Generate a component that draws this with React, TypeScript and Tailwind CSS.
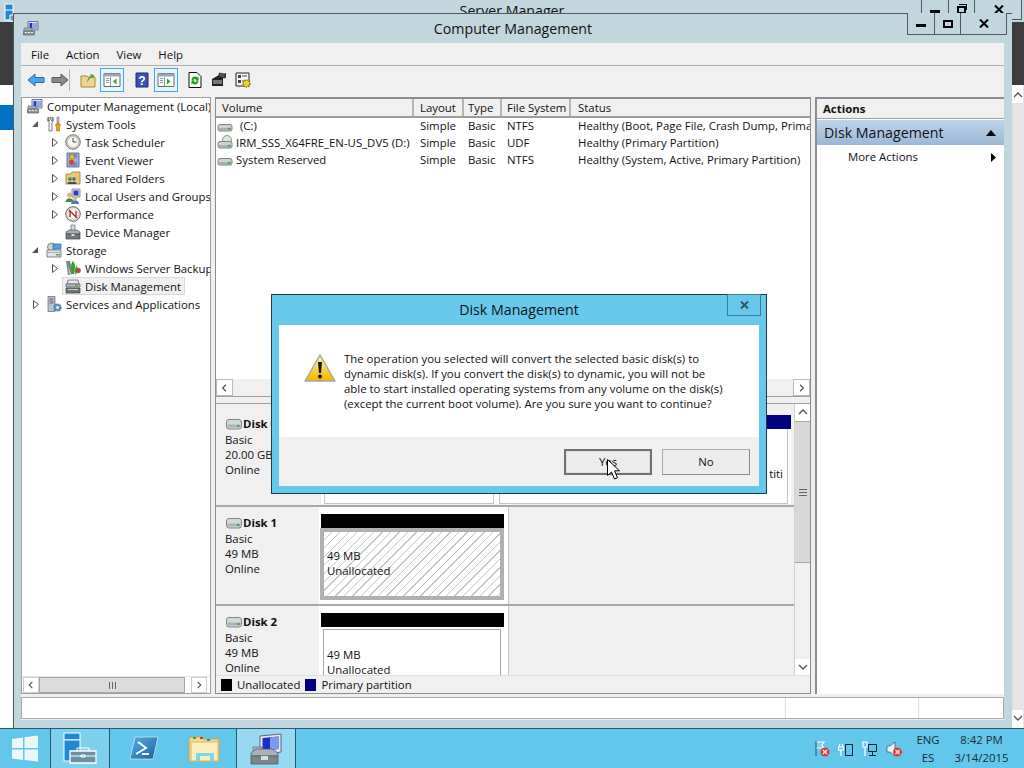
import React from "react";

const F = "font-['Open_Sans','Noto_Sans',sans-serif]";

const Computer = ({ s = 16 }: { s?: number }) => (
  <svg width={s} height={s} viewBox="0 0 16 16" className="shrink-0">
    <path d="M5 1.500h10v8.500H5z" fill="#dfe6ee" stroke="#6b7480" />
    <path d="M6.500 3h7v5.500h-7z" fill="#2233cc" />
    <path d="M9 3h4.500v5.500H9z" fill="#8fa8ee" />
    <path d="M1 8h8v3H1z" fill="#a9b2b4" stroke="#667" strokeWidth=".6" />
    <path d="M0.500 11h11v4h-11z" fill="#8b9698" stroke="#5c6668" strokeWidth=".7" />
    <path d="M2 12.500h2M5 12.500h2M8 12.500h2" stroke="#e8ecec" />
  </svg>
);
const Tools = () => (
  <svg width="16" height="16" viewBox="0 0 16 16" className="shrink-0">
    <path d="M4 1v3l-1.500 1.500V1C1 2 1 5 3 6.500V15h3V6.500C8 5 8 2 6.500 1v4.500L5 4V1z" fill="#f2f2f2" stroke="#666" strokeWidth=".8" />
    <path d="M11 1h2v7h-2z" fill="#bbb" stroke="#777" strokeWidth=".6" />
    <path d="M10 8h4l.5 1-1 2v4h-3v-4l-1-2z" fill="#e8a810" stroke="#a87008" strokeWidth=".6" />
  </svg>
);
const Clock = () => (
  <svg width="16" height="16" viewBox="0 0 16 16" className="shrink-0">
    <circle cx="8" cy="8" r="7.300" fill="#d8d2b8" stroke="#777" />
    <circle cx="8" cy="8" r="5.500" fill="#f8f8f4" stroke="#aaa" strokeWidth=".6" />
    <path d="M8 4v4h3.500" stroke="#444" fill="none" />
  </svg>
);
const EventV = () => (
  <svg width="16" height="16" viewBox="0 0 16 16" className="shrink-0">
    <path d="M2 1h12v14H2z" fill="#9fb2d8" stroke="#44598f" strokeWidth=".8" />
    <path d="M4 3h8M4 5h8M4 11h8M4 13h8" stroke="#44598f" strokeWidth=".8" />
    <path d="M7 1.500l3 5H4z" fill="#f4c820" stroke="#a88410" strokeWidth=".5" />
    <circle cx="6.500" cy="10" r="2.500" fill="#d84040" />
  </svg>
);
const FolderS = () => (
  <svg width="16" height="16" viewBox="0 0 16 16" className="shrink-0">
    <path d="M1 4h5l1-2h8v12H1z" fill="#e8c878" stroke="#a08030" strokeWidth=".8" />
    <circle cx="5" cy="9" r="1.800" fill="#3a8a3a" />
    <circle cx="9" cy="9" r="1.800" fill="#3a6aaa" />
    <path d="M2.500 14c0-3 5-3 5 0zM6.500 14c0-3 5-3 5 0z" fill="#446" />
  </svg>
);
const Users = () => (
  <svg width="16" height="16" viewBox="0 0 16 16" className="shrink-0">
    <path d="M7 1h8v8H7z" fill="#dfe6ee" stroke="#667" strokeWidth=".7" />
    <path d="M8.500 2.500h5v5h-5z" fill="#2a3ccc" />
    <circle cx="4.500" cy="7" r="2.500" fill="#d9b48c" />
    <path d="M0.500 14c0-5 8-5 8 0z" fill="#4a8a4a" />
    <circle cx="10" cy="10" r="2.300" fill="#e0b890" />
    <path d="M6 16c0-5 8-5 8 0z" fill="#4a78b8" />
  </svg>
);
const Perf = () => (
  <svg width="16" height="16" viewBox="0 0 16 16" className="shrink-0">
    <circle cx="8" cy="8" r="7.300" fill="#e8e4d8" stroke="#666" />
    <circle cx="8" cy="8" r="5" fill="#fff" stroke="#bbb" strokeWidth=".5" />
    <path d="M4 4l8 8M5 11V5l6 6V5" stroke="#b02020" strokeWidth="1.300" fill="none" />
  </svg>
);
const Device = () => (
  <svg width="16" height="16" viewBox="0 0 16 16" className="shrink-0">
    <path d="M6 1h4v6H6z" fill="#cfe0cf" stroke="#667" strokeWidth=".7" />
    <path d="M1 8l3-2h8l3 2v2H1z" fill="#a8b0b2" stroke="#556" strokeWidth=".7" />
    <path d="M1 10h14v5H1z" fill="#6f7a7e" stroke="#444" strokeWidth=".7" />
    <path d="M6.500 10h3v2h-3z" fill="#ddd" />
  </svg>
);
const Storage = () => (
  <svg width="16" height="16" viewBox="0 0 16 16" className="shrink-0">
    <circle cx="5.500" cy="5" r="4" fill="#ccd4cc" stroke="#667" strokeWidth=".7" />
    <path d="M7 2h8v5H7z" fill="#4ca4d8" stroke="#2a6a98" strokeWidth=".7" />
    <path d="M1 8h14v7H1z" fill="#e0e4e4" stroke="#667" strokeWidth=".8" />
    <path d="M10 12h4v1.500h-4z" fill="#58b048" />
    <path d="M2 10.500h12" stroke="#aab" />
  </svg>
);
const Backup = () => (
  <svg width="16" height="16" viewBox="0 0 16 16" className="shrink-0">
    <path d="M1 1l2 14h2L3 6l3 9 2-3-3-11z" fill="#7a8a8a" />
    <path d="M6 8c0-4 1-6 2-7 1 1 2 3 2 7l-1 6H7z" fill="#30a030" />
    <path d="M12 5l-3 4 1 6 3-3z" fill="#58c040" />
    <circle cx="13" cy="10.500" r="2.500" fill="#b05040" stroke="#555" strokeWidth=".5" />
  </svg>
);
const DiskM = () => (
  <svg width="16" height="16" viewBox="0 0 16 16" className="shrink-0">
    <path d="M3 2h10l1 4H2z" fill="#e4e8e8" stroke="#556" strokeWidth=".7" />
    <path d="M1 6h14v3H1z" fill="#b4bcbc" stroke="#556" strokeWidth=".7" />
    <path d="M10 7h3v1h-3z" fill="#40a040" />
    <path d="M1 10h14v5H1z" fill="#6c7678" stroke="#444" strokeWidth=".7" />
    <path d="M3 11.500h10" stroke="#ccc" />
  </svg>
);
const Services = () => (
  <svg width="16" height="16" viewBox="0 0 16 16" className="shrink-0">
    <path d="M2 0.500h7v15H2z" fill="#b8c2c8" stroke="#667" strokeWidth=".7" />
    <path d="M3.500 3h4M3.500 5h4M3.500 7h4" stroke="#667" />
    <circle cx="11.500" cy="11.500" r="3.500" fill="#6a9ac8" stroke="#3c6c98" strokeWidth="1.200" strokeDasharray="1.500 .8" />
    <circle cx="11.500" cy="11.500" r="1.200" fill="#fff" />
  </svg>
);
const DriveI = ({ cd }: { cd?: boolean }) => (
  <svg width="16" height="16" viewBox="0 0 16 16" className="shrink-0">
    {cd && <circle cx="10" cy="5" r="4.500" fill="#d8ead8" stroke="#667" strokeWidth=".7" />}
    <path d="M1 8.500q0-2 2-2h10q2 0 2 2v3q0 1.500-2 1.500H3q-2 0-2-1.500z" fill="#cdd2d2" stroke="#7a8282" />
    <path d="M2 10h12v2H2z" fill="#a9afaf" />
    <path d="M11 9.800h2.500v2H11z" fill="#48a848" />
  </svg>
);
const DiskSmall = () => (
  <svg width="16" height="11" viewBox="0 0 16 11" className="shrink-0">
    <path d="M.500 3q0-2.500 2.500-2.500h10q2.500 0 2.500 2.500v4.500q0 2.500-2.500 2.500H3q-2.500 0-2.500-2.500z" fill="#d4d8d8" stroke="#808686" />
    <path d="M1.500 5.500h13v3h-13z" fill="#aeb4b4" />
    <path d="M11 6h2.500v2H11z" fill="#48a848" />
  </svg>
);

const Arrow = ({ open }: { open?: boolean }) =>
  open ? (
    <svg width="16" height="18" viewBox="0 0 16 18" className="shrink-0">
      <path d="M11 6v6H5z" fill="#595959" />
    </svg>
  ) : (
    <svg width="16" height="18" viewBox="0 0 16 18" className="shrink-0">
      <path d="M6.500 5.500l5 4-5 4z" fill="#fff" stroke="#555" />
    </svg>
  );

const TreeRow = ({
  pad,
  arrow,
  icon,
  label,
  selected,
}: {
  pad: string;
  arrow?: "open" | "closed" | "none";
  icon: React.ReactNode;
  label: string;
  selected?: boolean;
}) => (
  <div className={`flex h-[18px] items-center ${pad}`}>
    {arrow === "open" && <div className="mr-[3px]"><Arrow open /></div>}
    {arrow === "closed" && <div className="mr-[3px]"><Arrow /></div>}
    {arrow === "none" && <div className="mr-[3px] w-[16px]" />}
    <div className={`flex h-[18px] items-center ${selected ? "-ml-[3px] border border-[#d9d9d9] bg-[#f0f0f0] pl-[2px]" : ""}`}>
      {icon}
      <span className={`whitespace-nowrap pl-[4px] leading-[17px] ${selected ? "pr-[3px]" : ""}`}>{label}</span>
    </div>
  </div>
);

const Th = ({ w, pl, children }: { w: string; pl: string; children: React.ReactNode }) => (
  <div className={`flex h-full shrink-0 items-center border-r-2 border-[#b4b4b4] ${pl} ${w}`}>{children}</div>
);

const VolRow = ({ icon, name, pl, layout, type, fs, status }: any) => (
  <div className="flex h-[17px] items-center whitespace-nowrap">
    <div className="flex w-[199px] shrink-0 items-center pl-[1px]">
      {icon}
      <span className={pl}>{name}</span>
    </div>
    <div className="w-[50px] shrink-0 pl-[5px]">{layout}</div>
    <div className="w-[38px] shrink-0 pl-[3px]">{type}</div>
    <div className="w-[71px] shrink-0 pl-[4px]">{fs}</div>
    <div className="shrink-0 pl-[4px]">{status}</div>
  </div>
);

const Chevron = ({ d }: { d: "l" | "r" | "u" | "d" }) => {
  const p = { l: "M9.500 4.500L6 8l3.500 3.500", r: "M6.500 4.500L10 8l-3.500 3.500", u: "M4 10l4-4 4 4", d: "M4 6l4 4 4-4" }[d];
  return (
    <svg width="16" height="16" viewBox="0 0 16 16">
      <path d={p} fill="none" stroke="#555" strokeWidth="1.300" />
    </svg>
  );
};

const ToolBtn = ({ active, children, mr }: { active?: boolean; children: React.ReactNode; mr?: string }) => (
  <div className={`flex h-[24px] w-[24px] shrink-0 items-center justify-center ${active ? "border border-[#45a6e0] bg-[#e8f3fa]" : ""} ${mr ?? ""}`}>{children}</div>
);

const PaneIcon = ({ right }: { right?: boolean }) => (
  <svg width="18" height="16" viewBox="0 0 18 16">
    <path d="M1 1.500h16v13H1z" fill="#fff" stroke="#5d6b7a" />
    <path d="M1 1.500h16v3H1z" fill="#9aa8b6" />
    <path d="M3 6.500h3M3 8.500h3M3 10.500h3" stroke="#8a97a4" />
    <path d="M7.500 5v9" stroke="#8a97a4" />
    <path d={right ? "M10 6.500l3.500 3-3.500 3z" : "M13.500 6.500l-3.500 3 3.500 3z"} fill="#30a030" />
  </svg>
);

const RedX = ({ x, y }: { x: number; y: number }) => (
  <g>
    <circle cx={x} cy={y} r="4.500" fill="#e03a3a" />
    <path d={`M${x - 2} ${y - 2}l4 4m0-4l-4 4`} stroke="#fff" strokeWidth="1.200" />
  </g>
);

const Legend = ({ c, t }: { c: string; t: string }) => (
  <div className="flex items-center gap-[5px]">
    <div className={`h-[12px] w-[11px] ${c}`} />
    <span>{t}</span>
  </div>
);

const DiskLabel = ({ name, size, pt }: { name: string; size: string; pt: string }) => (
  <div className={`w-[103px] shrink-0 pl-[9px] leading-[15px] ${pt}`}>
    <div className="flex h-[16px] items-center gap-[1px] pl-[1px] font-bold">
      <DiskSmall />
      <span className="leading-[16px]">{name}</span>
    </div>
    <div>Basic</div>
    <div>{size}</div>
    <div>Online</div>
  </div>
);

export default function App() {
  return (
    <div className={`relative h-[768px] w-[1024px] overflow-hidden bg-white text-[11.4px] text-[#111] ${F}`}>
      {/* back window: Server Manager */}
      <div className="absolute inset-x-0 top-0 h-[728px] bg-white">
        <div className="relative h-[22px] bg-[#c2d6dd] text-center text-[14.2px] leading-[22px]">
          Server Manager
          <svg width="18" height="20" viewBox="0 0 18 20" className="absolute left-[2px] top-[3px]">
            <path d="M3 1h8v16H3z" fill="#1e8ad6" stroke="#fff" />
            <path d="M3 7h8" stroke="#fff" />
            <path d="M8 12h9v6H8z" fill="#7a93a5" stroke="#fff" />
          </svg>
          <div className="absolute right-[2px] top-0 flex h-[20px] w-[101px] border-x border-b border-[#4a5a62]">
            <div className="flex w-[27px] justify-center border-r border-[#4a5a62]">
              <div className="mt-[10px] h-[3px] w-[10px] bg-black" />
            </div>
            <div className="flex w-[26px] justify-center border-r border-[#4a5a62]">
              <div className="relative mt-[6px] h-[8px] w-[9px] border-2 border-black">
                <div className="absolute -right-[3px] -top-[4px] h-[6px] w-[8px] border-r border-t border-black" />
              </div>
            </div>
            <div className="flex flex-1 justify-center pl-[2px] pt-[5px]">
              <svg width="10" height="9" viewBox="0 0 10 9"><path d="M1 .5l8 8m0-8l-8 8" stroke="#000" strokeWidth="2" /></svg>
            </div>
          </div>
        </div>
        <div className="h-[63px] bg-[#3c3c3c]" />
        <div className="h-[20px] bg-white" />
        <div className="h-[25px] w-[13px] bg-[#0072c6]" />
        <div className="absolute right-0 top-[85px] h-[643px] w-[12px] border-l border-[#ddd] bg-[#e6e6e6]">
          <div className="-ml-[3px] h-[18px] w-[13px] overflow-hidden bg-white pt-[2px]"><Chevron d="u" /></div>
          <div className="absolute bottom-0 -ml-[3px] h-[18px] w-[13px] overflow-hidden bg-white"><Chevron d="d" /></div>
        </div>
      </div>

      {/* front window */}
      <div className="absolute left-[13px] top-[13px] flex h-[715px] w-[999px] flex-col border-l border-t border-[#4b5a62] bg-[#c2d6dd] pb-[8px]">
        <div className="relative h-[29px] shrink-0 text-center text-[14.2px] leading-[29px]">
          Computer Management
          <div className="absolute left-[9px] top-[6px]"><Computer /></div>
          <div className="absolute right-[5px] top-[-1px] flex h-[22px] w-[100px] border-x border-b border-[#4b5a62] bg-[#c2d6dd]">
            <div className="flex w-[27px] items-center justify-center border-r border-[#4b5a62]">
              <div className="mt-[4px] h-[3px] w-[10px] bg-black" />
            </div>
            <div className="flex w-[26px] items-center justify-center border-r border-[#4b5a62]">
              <div className="h-[8px] w-[10px] border-2 border-black" />
            </div>
            <div className="flex flex-1 items-center justify-center">
              <svg width="10" height="9" viewBox="0 0 10 9"><path d="M1 .5l8 8m0-8l-8 8" stroke="#000" strokeWidth="2" /></svg>
            </div>
          </div>
        </div>

        <div className="ml-[7px] mr-[8px] flex min-h-0 flex-1 flex-col bg-[#f0f0f0]">
          {/* menu */}
          <div className="flex h-[23px] shrink-0 items-center gap-[17px] border-b border-[#b0b0b0] pl-[10px] pt-[2px]">
            <span>File</span><span>Action</span><span>View</span><span>Help</span>
          </div>
          {/* toolbar */}
          <div className="flex h-[28px] shrink-0 items-center pl-[3px]">
            <ToolBtn>
              <svg width="18" height="14" viewBox="0 0 18 14"><path d="M8 1L1 7l7 6V9.500h9v-5H8z" fill="#4aa8e8" stroke="#1c6cb4" /></svg>
            </ToolBtn>
            <ToolBtn>
              <svg width="18" height="14" viewBox="0 0 18 14"><path d="M10 1l7 6-7 6V9.500H1v-5h9z" fill="#8a8a8a" stroke="#5a5a5a" /></svg>
            </ToolBtn>
            <div className="-ml-[3px] mr-[6px] h-[22px] w-px shrink-0 bg-[#b4b4b4]" />
            <ToolBtn>
              <svg width="16" height="16" viewBox="0 0 16 16">
                <path d="M1 4h6l1 1h7v10H1z" fill="#efd48e" stroke="#a8883c" />
                <path d="M7 11c0-4 2-6 4-7l-1-2 4 1-1 4-1-2c-2 1-4 3-5 6z" fill="#3aa63a" />
              </svg>
            </ToolBtn>
            <ToolBtn active><PaneIcon /></ToolBtn>
            <div className="w-[6px] shrink-0" />
            <ToolBtn>
              <svg width="14" height="16" viewBox="0 0 14 16">
                <path d="M1 1h12v14H1z" fill="#3a52b0" stroke="#1c2c70" />
                <text x="7" y="12.500" textAnchor="middle" fontSize="12" fontWeight="700" fill="#fff" fontFamily="Liberation Sans">?</text>
              </svg>
            </ToolBtn>
            <ToolBtn active><PaneIcon right /></ToolBtn>
            <div className="w-[5px] shrink-0" />
            <ToolBtn>
              <svg width="14" height="16" viewBox="0 0 14 16">
                <path d="M1 .5h8l4 4v11H1z" fill="#fff" stroke="#111" />
                <path d="M3.500 8a3.500 3.500 0 0 1 6-2.500l1-1v4H7l1-1a2 2 0 0 0-3 1z M10.500 9a3.500 3.500 0 0 1-6 2.500l-1 1v-4H7l-1 1a2 2 0 0 0 3-1z" fill="#20a020" />
              </svg>
            </ToolBtn>
            <ToolBtn>
              <svg width="16" height="16" viewBox="0 0 16 16">
                <path d="M1 7l7-4 4 2v9H1z" fill="#222" />
                <path d="M2 9h9M2 11h9" stroke="#ccc" />
                <path d="M8 1l6 1v4l-6-1z" fill="#555" stroke="#111" strokeWidth=".6" />
                <path d="M14.500 1v5" stroke="#345" />
              </svg>
            </ToolBtn>
            <ToolBtn>
              <svg width="16" height="16" viewBox="0 0 16 16">
                <path d="M1 1h13v13H1z" fill="#f8f8f8" stroke="#222" />
                <path d="M3 3h3v3H3zM3 8h3v3H3z" fill="#444" />
                <path d="M7 4h5M7 9h2" stroke="#444" />
                <circle cx="11.500" cy="11.500" r="3.500" fill="#f0d020" stroke="#806800" strokeWidth="1.200" strokeDasharray="1.500 .8" />
              </svg>
            </ToolBtn>
          </div>
          {/* panes */}
          <div className="mt-[3px] flex h-[597px] shrink-0">
            {/* tree */}
            <div className="flex w-[190px] shrink-0 flex-col border border-[#a0a0a0] bg-white">
              <div className="min-h-0 flex-1 overflow-hidden">
                <div className="-mt-[1px]">
                  <TreeRow pad="pl-[5px]" icon={<Computer />} label="Computer Management (Local)" />
                  <TreeRow pad="pl-[5px]" arrow="open" icon={<Tools />} label="System Tools" />
                  <TreeRow pad="pl-[24px]" arrow="closed" icon={<Clock />} label="Task Scheduler" />
                  <TreeRow pad="pl-[24px]" arrow="closed" icon={<EventV />} label="Event Viewer" />
                  <TreeRow pad="pl-[24px]" arrow="closed" icon={<FolderS />} label="Shared Folders" />
                  <TreeRow pad="pl-[24px]" arrow="closed" icon={<Users />} label="Local Users and Groups" />
                  <TreeRow pad="pl-[24px]" arrow="closed" icon={<Perf />} label="Performance" />
                  <TreeRow pad="pl-[24px]" arrow="none" icon={<Device />} label="Device Manager" />
                  <TreeRow pad="pl-[5px]" arrow="open" icon={<Storage />} label="Storage" />
                  <TreeRow pad="pl-[24px]" arrow="closed" icon={<Backup />} label="Windows Server Backup" />
                  <TreeRow pad="pl-[24px]" arrow="none" icon={<DiskM />} label="Disk Management" selected />
                  <TreeRow pad="pl-[5px]" arrow="closed" icon={<Services />} label="Services and Applications" />
                </div>
              </div>
              <div className="flex h-[17px] shrink-0 items-center border-t border-[#e4e4e4] px-[1px]">
                <div className="flex h-[16px] w-[16px] items-center justify-center border border-[#cfcfcf] bg-white"><Chevron d="l" /></div>
                <div className="flex h-[16px] w-[146px] items-center justify-center border border-[#a8a8a8] bg-[#dcdcdc]">
                  <svg width="7" height="7" viewBox="0 0 7 7"><path d="M.500 0v7M3.500 0v7M6.500 0v7" stroke="#666" /></svg>
                </div>
                <div className="w-[6px]" />
                <div className="flex h-[16px] w-[16px] items-center justify-center border border-[#cfcfcf] bg-white"><Chevron d="r" /></div>
              </div>
            </div>
            <div className="w-[4px] shrink-0" />
            {/* center */}
            <div className="flex w-[596px] shrink-0 flex-col border border-t-2 border-[#8e8e8e]">
              <div className="flex h-[19px] shrink-0 items-center overflow-hidden border-b-2 border-[#9e9e9e] bg-[#f0f0f0]">
                <Th w="w-[198px]" pl="pl-[6px]">Volume</Th>
                <Th w="w-[50px]" pl="pl-[6px]">Layout</Th>
                <Th w="w-[38px]" pl="pl-[4px]">Type</Th>
                <Th w="w-[69px]" pl="pl-[5px]">File System</Th>
                <div className="pl-[7px]">Status</div>
              </div>
              <div className="relative h-[278px] shrink-0 overflow-hidden bg-white">
                <div className="-mt-[1px]">
                  <VolRow icon={<DriveI />} name="(C:)" pl="ml-[7px]" layout="Simple" type="Basic" fs="NTFS" status="Healthy (Boot, Page File, Crash Dump, Primary Partition)" />
                  <VolRow icon={<DriveI cd />} name="IRM_SSS_X64FRE_EN-US_DV5 (D:)" pl="ml-[3px]" layout="Simple" type="Basic" fs="UDF" status="Healthy (Primary Partition)" />
                  <VolRow icon={<DriveI />} name="System Reserved" pl="ml-[3px]" layout="Simple" type="Basic" fs="NTFS" status="Healthy (System, Active, Primary Partition)" />
                </div>
                <div className="absolute inset-x-0 bottom-0 flex h-[17px] items-center justify-between bg-[#f0f0f0]">
                  <div className="flex h-[17px] w-[17px] items-center justify-center border border-[#bbb] bg-white"><Chevron d="l" /></div>
                  <div className="flex h-[17px] w-[17px] items-center justify-center border border-[#bbb] bg-white"><Chevron d="r" /></div>
                </div>
              </div>
              <div className="h-[8px] shrink-0 border-y border-[#9e9e9e] bg-[#f0f0f0]" />
              <div className="relative min-h-0 flex-1 overflow-hidden bg-[#f0f0f0]">
                <div className="mr-[16px] h-full overflow-hidden">
                  {/* disk 0 */}
                  <div className="flex h-[103px] border-b-2 border-[#a8a8a8]">
                    <DiskLabel name="Disk 0" size="20.00 GB" pt="pt-[12px]" />
                    <div className="flex flex-1 flex-col pl-[2px] pt-[11px]">
                      <div className="h-[14px] w-[470px] bg-[#000080]" />
                      <div className="flex h-[75px] w-[470px] gap-[5px] bg-white px-[3px]">
                        <div className="h-full w-[170px] border border-t-0 border-[#c4c4c4]" />
                        <div className="h-full flex-1 border border-t-0 border-[#c4c4c4] pr-[4px] pt-[36px] text-right">titi</div>
                      </div>
                    </div>
                  </div>
                  {/* disk 1 */}
                  <div className="flex h-[99px] border-b-2 border-[#a8a8a8]">
                    <DiskLabel name="Disk 1" size="49 MB" pt="pt-[8px]" />
                    <div className="flex w-[190px] flex-col border-r border-[#c4c4c4] bg-white pl-[1px] pr-[4px] pt-[7px]">
                      <div className="ml-[1px] h-[14px] bg-black" />
                      <div className="h-[72px] border-[4px] border-[#b0b0b0] bg-[repeating-linear-gradient(135deg,#fff_0,#fff_5px,#c4c4c4_5px,#c4c4c4_6px)] pl-[3px] pt-[16px] leading-[15px]">
                        <div>49 MB</div>
                        <div>Unallocated</div>
                      </div>
                    </div>
                  </div>
                  {/* disk 2 */}
                  <div className="flex h-[70px]">
                    <DiskLabel name="Disk 2" size="49 MB" pt="pt-[8px]" />
                    <div className="flex h-[94px] w-[190px] shrink-0 flex-col border-r border-[#c4c4c4] bg-white pl-[1px] pr-[4px] pt-[7px]">
                      <div className="ml-[1px] h-[14px] shrink-0 bg-black" />
                      <div className="mx-[3px] mt-[2px] h-[71px] shrink-0 border border-[#a8a8a8] bg-white pl-[3px] pt-[17px] leading-[15px]">
                        <div>49 MB</div>
                        <div>Unallocated</div>
                      </div>
                    </div>
                  </div>
                </div>
                {/* vertical scrollbar */}
                <div className="absolute bottom-[18px] right-0 top-0 flex w-[16px] flex-col border-l border-[#d0d0d0] bg-[#f0f0f0]">
                  <div className="h-[17px] bg-white"><Chevron d="u" /></div>
                  <div className="flex h-[142px] items-center justify-center border-y border-[#a8a8a8] bg-[#d8d8d8]">
                    <svg width="8" height="7" viewBox="0 0 8 7"><path d="M0 .5h8M0 3.500h8M0 6.500h8" stroke="#666" /></svg>
                  </div>
                  <div className="flex-1" />
                  <div className="h-[16px] bg-white"><Chevron d="d" /></div>
                </div>
                <div className="absolute inset-x-0 bottom-0 flex h-[18px] items-center gap-[5px] border-t border-[#e0e0e0] bg-[#f0f0f0] pl-[5px]">
                  <Legend c="bg-black" t="Unallocated" />
                  <Legend c="bg-[#000080]" t="Primary partition" />
                </div>
              </div>
            </div>
            <div className="w-[4px] shrink-0" />
            {/* actions */}
            <div className="flex min-w-0 flex-1 flex-col border-l-2 border-t-2 border-[#8e8e8e] bg-white">
              <div className="flex h-[20px] shrink-0 items-center border-b border-[#a0a0a0] bg-[#f0f0f0] pl-[6px] pt-[1px] font-bold">Actions</div>
              <div className="mt-[1px] flex h-[25px] shrink-0 items-center justify-between bg-gradient-to-b from-[#bcd4ec] to-[#9cb8d6] pl-[7px] pr-[8px] text-[14.2px]">
                <span className="pt-[1px]">Disk Management</span>
                <svg width="10" height="6" viewBox="0 0 10 6"><path d="M5 0l5 6H0z" fill="#000" /></svg>
              </div>
              <div className="flex h-[24px] shrink-0 items-center justify-between pl-[31px] pr-[8px]">
                <span>More Actions</span>
                <svg width="5" height="9" viewBox="0 0 5 9"><path d="M0 0l5 4.500L0 9z" fill="#000" /></svg>
              </div>
            </div>
          </div>
          {/* status bar */}
          <div className="mt-[3px] flex h-[22px] shrink-0 border border-[#a8a8a8] bg-white">
            <div className="w-[764px] border-r border-[#ddd]" />
            <div className="w-[133px] border-r border-[#ddd]" />
          </div>
        </div>
      </div>

      {/* dialog */}
      <div className="absolute left-[271px] top-[294px] flex h-[200px] w-[496px] flex-col border border-[#1e3a4a] bg-[#66c9eb]">
        <div className="relative h-[30px] shrink-0 text-center text-[14.2px] leading-[29px]">
          Disk Management
          <div className="absolute right-[5px] top-[-1px] flex h-[22px] w-[34px] items-center justify-center border border-[#3f7a94]">
            <svg width="9" height="8" viewBox="0 0 9 8"><path d="M1 .5l7 7m0-7l-7 7" stroke="#35505e" strokeWidth="1.800" /></svg>
          </div>
        </div>
        <div className="mx-[7px] mb-[7px] flex min-h-0 flex-1 flex-col bg-white">
          <div className="flex h-[112px] shrink-0">
            <div className="ml-[25px] mt-[29px] shrink-0">
              <svg width="32" height="28" viewBox="0 0 32 28">
                <defs>
                  <linearGradient id="w" x1="0" y1="0" x2="0" y2="1">
                    <stop offset="0" stopColor="#fff3a0" />
                    <stop offset="1" stopColor="#f0b800" />
                  </linearGradient>
                </defs>
                <path d="M16 1l15 26H1z" fill="url(#w)" stroke="#a8a8a8" strokeWidth="1.500" strokeLinejoin="round" />
                <path d="M14 8h4l-1 11h-2z" fill="#111" />
                <circle cx="16" cy="22.500" r="2" fill="#111" />
              </svg>
            </div>
            <div className="ml-[8px] mt-[26px] whitespace-nowrap leading-[15px]">
              <div>The operation you selected will convert the selected basic disk(s) to</div>
              <div>dynamic disk(s). If you convert the disk(s) to dynamic, you will not be</div>
              <div>able to start installed operating systems from any volume on the disk(s)</div>
              <div>(except the current boot volume). Are you sure you want to continue?</div>
            </div>
          </div>
          <div className="flex flex-1 items-start justify-end gap-[10px] bg-[#f0f0f0] pr-[9px] pt-[12px]">
            <div className="flex h-[26px] w-[88px] items-center justify-center border-2 border-[#707070] bg-[#ececec] shadow-[inset_0_0_0_1px_#e0e0e0]">Yes</div>
            <div className="flex h-[26px] w-[88px] items-center justify-center border border-[#acacac] border-b-[#8c8c8c] border-r-[#8c8c8c] bg-[#ececec]">No</div>
          </div>
        </div>
      </div>

      {/* mouse pointer */}
      <svg width="13" height="22" viewBox="0 0 13 22" className="absolute left-[607px] top-[459px]">
        <path d="M.5.5v16l4-3.500 3 7 3-1.200-3-7h5z" fill="#fff" stroke="#000" />
      </svg>

      {/* taskbar */}
      <div className="absolute inset-x-0 bottom-0 flex h-[40px] border-t border-[#33566a] bg-[#62c7ea]">
        <div className="flex w-[51px] items-center justify-center border-r border-[#33566a]">
          <svg width="28" height="27" viewBox="0 0 28 27">
            <path d="M1 4l11-1.500V13H1zM13.500 2.300L27 .5V13H13.500zM1 14.500h11V25L1 23.500zM13.500 14.500H27V26.500L13.500 25z" fill="#eaf8fd" />
          </svg>
        </div>
        <div className="flex w-[59px] items-center justify-center border-r border-[#33566a] bg-[#7dd0ee]">
          <svg width="34" height="33" viewBox="0 0 34 33">
            <path d="M1 1h16v7H1z" fill="#1e8ad6" stroke="#fff" />
            <path d="M1 8h16v21H1z" fill="#1e8ad6" stroke="#fff" />
            <path d="M7 19h26v12H7z" fill="#6f8fa5" stroke="#fff" strokeWidth="1.300" />
            <path d="M14 19v-3h12v3M7 24h26M18 23h4v2h-4z" fill="none" stroke="#fff" />
          </svg>
        </div>
        <div className="flex w-[126px] items-center">
          <div className="ml-[19px]">
            <svg width="30" height="25" viewBox="0 0 30 25">
              <defs>
                <linearGradient id="ps" x1="0" y1="0" x2="1" y2="1">
                  <stop offset="0" stopColor="#58b0e8" />
                  <stop offset="1" stopColor="#1a5f9c" />
                </linearGradient>
              </defs>
              <path d="M6 1h23l-5 22H1z" fill="url(#ps)" stroke="#e8f6fc" strokeWidth=".6" />
              <path d="M9 6l8 6-10 6M13 18h7" fill="none" stroke="#fff" strokeWidth="2" />
            </svg>
          </div>
          <div className="ml-[29px]">
            <svg width="33" height="28" viewBox="0 0 33 28">
              <path d="M1 5q0-3 3-3h9l2 2h16v22H1z" fill="#f2d98c" stroke="#c8a850" />
              <path d="M3 7h27v19H3z" fill="#fbeeb8" stroke="#d8bc68" />
              <path d="M5 2h3v2H5z" fill="#3aa63a" />
              <path d="M12 2h3v2h-3z" fill="#d04030" />
              <path d="M19 4h3v2h-3z" fill="#2a88d0" />
              <path d="M8 26V18h18v8h-4v-5H12v5z" fill="#7fd4ee" />
            </svg>
          </div>
        </div>
        <div className="flex w-[60px] items-center justify-center border-x border-[#33566a] bg-[#97d9f1]">
          <svg width="32" height="32" viewBox="0 0 32 32">
            <path d="M10 3l21-2v18l-21 3z" fill="#e4e9ee" stroke="#5c6670" />
            <path d="M12.500 5l16-1.500V16l-16 2.500z" fill="#1830c8" />
            <path d="M20 4.500l8.500-1V16l-8.500 1.300z" fill="#7d9af0" />
            <path d="M3 14h9v6H3z" fill="#b0b8ba" stroke="#667" strokeWidth=".7" />
            <path d="M1 20l5-4h16l6 4v3H1z" fill="#aab2b6" stroke="#556" strokeWidth=".7" />
            <path d="M1 23h27v8H1z" fill="#7b868a" stroke="#4a5458" strokeWidth=".7" />
            <path d="M11 23h7v4h-7z" fill="#d8dcdc" />
          </svg>
        </div>
        <div className="flex-1" />
        <div className="flex items-center gap-[8px] pr-[5px]">
          <svg width="16" height="17" viewBox="0 0 16 17"><path d="M2 2h8l-2 3 2 3H2" fill="#7dd0ee" stroke="#fff" strokeWidth="1.200" /><path d="M2 1v15" stroke="#34505e" /><RedX x={11} y={12} /></svg>
          <svg width="16" height="16" viewBox="0 0 16 16"><path d="M7.500 3.500h7v11h-7z" fill="none" stroke="#123" /><path d="M1.500 3v3M4.500 3v3M.5 6h5v3h-5zM3 9v6" fill="none" stroke="#fff" strokeWidth="1.200" /></svg>
          <svg width="16" height="16" viewBox="0 0 16 16"><path d="M6.500 3.500h8v7h-8zM10.500 11v3M7 14.500h7" fill="none" stroke="#123" /><path d="M1 1h4v5H1zM3 6v9" fill="none" stroke="#fff" strokeWidth="1.200" /></svg>
          <svg width="16" height="16" viewBox="0 0 16 16"><path d="M1 5h3l5-4v14l-5-4H1z" fill="#e6f6fb" stroke="#34505e" strokeWidth=".7" /><RedX x={11.500} y={11} /></svg>
        </div>
        <div className="flex w-[42px] flex-col items-center justify-center leading-[18px] text-[#1c2c34]">
          <span>ENG</span><span>ES</span>
        </div>
        <div className="mr-[10px] flex w-[65px] flex-col items-center justify-center leading-[18px] text-[#1c2c34]">
          <span>8:42 PM</span><span>3/14/2015</span>
        </div>
      </div>
    </div>
  );
}
